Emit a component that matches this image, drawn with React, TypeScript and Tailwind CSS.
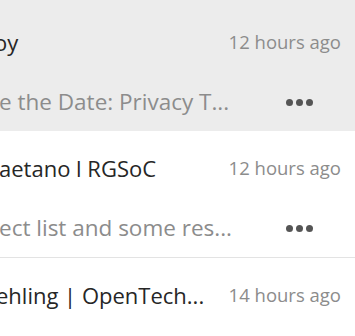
const rows = [
  {
    name: "oy",
    nameShift: "-ml-[6px]",
    time: "12 hours ago",
    sub: "e the Date: Privacy T...",
    subShift: "-ml-[1px]",
    active: true,
  },
  {
    name: "aetano l RGSoC",
    nameShift: "-ml-[1px]",
    time: "12 hours ago",
    sub: "ect list and some res...",
    subShift: "-ml-[1px]",
    active: false,
  },
  {
    name: "ehling | OpenTech...",
    nameShift: "-ml-[4px]",
    time: "14 hours ago",
    sub: "",
    subShift: "",
    active: false,
  },
];

function Dots() {
  return (
    <div className="flex items-center gap-[3px] mr-[42px] shrink-0">
      <span className="w-[7px] h-[7px] rounded-full bg-[#555555]" />
      <span className="w-[7px] h-[7px] rounded-full bg-[#555555]" />
      <span className="w-[7px] h-[7px] rounded-full bg-[#555555]" />
    </div>
  );
}

export default function App() {
  return (
    <div
      className="w-[355px] h-[336px] overflow-hidden bg-white"
      style={{ fontFamily: "'Open Sans', 'Lato', sans-serif" }}
    >
      {rows.map((r, i) => (
        <div
          key={i}
          className={
            r.active
              ? "flex flex-col h-[131px] pt-[28px] pb-[15px] bg-[#ececec]"
              : "flex flex-col h-[127px] pt-[23px] pb-[15px] border-b border-[#e3e3e3]"
          }
        >
          <div className="flex items-center h-[28px] pr-[14px] gap-3">
            <div className="flex-1 min-w-0 overflow-hidden whitespace-nowrap">
              <span className={"inline-block text-[22px] text-[#262626] " + r.nameShift}>
                {r.name}
              </span>
            </div>
            <span className="text-[18.5px] text-[#8c8c8c] whitespace-nowrap">{r.time}</span>
          </div>
          {r.sub && (
            <div className="flex items-center h-[28px] mt-[32px]">
              <div className="flex-1 min-w-0 overflow-hidden whitespace-nowrap">
                <span className={"inline-block text-[22.5px] text-[#8c8c8c] " + r.subShift}>
                  {r.sub}
                </span>
              </div>
              <Dots />
            </div>
          )}
        </div>
      ))}
    </div>
  );
}
